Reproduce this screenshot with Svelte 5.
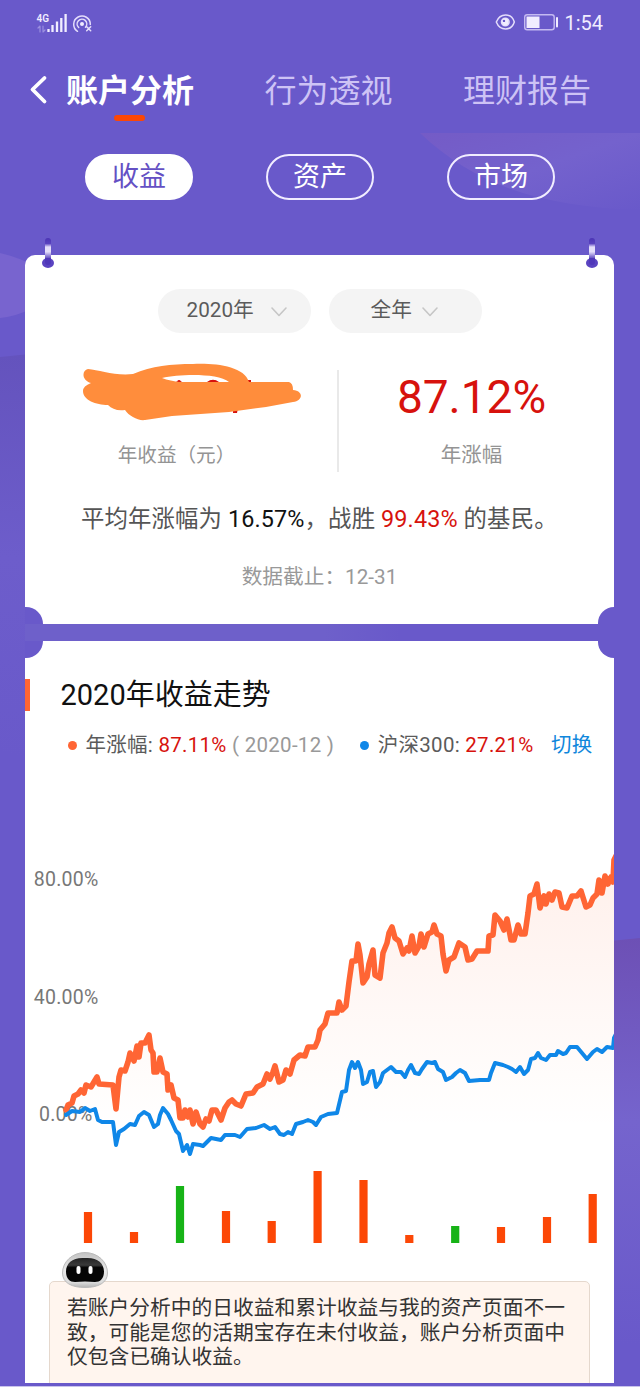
<script lang="ts">
	type Point = [number, number];

	const tabs = ['账户分析', '行为透视', '理财报告'];
	const views = ['收益', '资产', '市场'];

	let activeTab = $state(0);
	let activeView = $state(0);

	// both series share the chart's viewBox units
	const fund: Point[] = [
		[66, 1110], [68, 1105], [72, 1103], [74, 1096], [78, 1094], [81, 1090], [84, 1093], [86, 1085],
		[91, 1087], [94, 1082], [97, 1077], [99, 1084], [113, 1085], [116, 1109], [119, 1077], [121, 1070],
		[125, 1071], [128, 1062], [130, 1053], [134, 1061], [137, 1046], [139, 1057], [141, 1043],
		[145, 1043], [149, 1035], [151, 1050], [153, 1053], [154, 1072], [157, 1072], [160, 1058],
		[163, 1072], [167, 1074], [168, 1090], [171, 1085], [174, 1098], [178, 1100], [180, 1118],
		[183, 1118], [185, 1110], [188, 1117], [190, 1110], [193, 1124], [196, 1112], [200, 1124], [203, 1127],
		[206, 1119], [209, 1121], [212, 1110], [216, 1110], [221, 1120], [225, 1108], [229, 1102],
		[232, 1100], [236, 1104], [241, 1106], [246, 1094], [253, 1093], [257, 1087], [263, 1084],
		[267, 1074], [270, 1079], [273, 1072], [275, 1066], [279, 1082], [283, 1080], [286, 1070], [290, 1074],
		[294, 1060], [300, 1055], [305, 1056], [308, 1047], [315, 1047], [318, 1040], [320, 1030],
		[325, 1024], [328, 1013], [337, 1013], [339, 1002], [342, 1010], [346, 1006], [349, 982],
		[352, 961], [356, 961], [358, 944], [360, 955], [363, 983], [367, 977], [369, 964], [373, 950],
		[375, 975], [380, 978], [383, 953], [387, 943], [389, 933], [392, 927], [395, 938], [399, 941],
		[403, 954], [407, 948], [409, 951], [412, 936], [415, 953], [419, 946], [421, 934], [424, 947],
		[428, 934], [432, 932], [434, 925], [437, 934], [441, 936], [443, 954], [446, 971], [449, 960],
		[454, 957], [459, 943], [465, 947], [468, 960], [472, 959], [477, 951], [488, 951], [489, 936],
		[493, 935], [495, 915], [500, 921], [504, 930], [507, 919], [511, 940], [514, 940], [518, 925],
		[521, 934], [525, 934], [528, 913], [530, 896], [534, 894], [537, 884], [540, 908], [544, 896],
		[546, 904], [549, 894], [552, 900], [555, 892], [559, 893], [562, 907], [567, 908], [572, 896],
		[577, 896], [581, 891], [586, 907], [590, 905], [593, 898], [597, 894], [599, 880], [602, 893],
		[605, 876], [608, 884], [611, 877], [613, 882], [614, 860], [616, 856]
	];

	const index300: Point[] = [
		[66, 1115], [72, 1111], [80, 1112], [85, 1108], [90, 1111], [95, 1109], [98, 1120], [102, 1122],
		[113, 1122], [116, 1145], [119, 1132], [124, 1129], [130, 1124], [135, 1125], [139, 1116],
		[144, 1112], [149, 1115], [154, 1127], [158, 1124], [160, 1115], [163, 1108], [168, 1114],
		[171, 1120], [176, 1131], [179, 1134], [183, 1151], [187, 1145], [190, 1154], [193, 1144],
		[200, 1145], [203, 1146], [207, 1142], [211, 1138], [216, 1139], [221, 1140], [225, 1135],
		[230, 1135], [235, 1135], [240, 1137], [247, 1129], [256, 1128], [264, 1125], [270, 1129],
		[275, 1127], [280, 1134], [284, 1135], [288, 1132], [292, 1134], [296, 1124], [303, 1122],
		[308, 1120], [313, 1122], [316, 1125], [321, 1117], [328, 1114], [337, 1113], [342, 1092],
		[346, 1091], [349, 1070], [352, 1062], [355, 1068], [358, 1062], [361, 1070], [363, 1084],
		[367, 1082], [370, 1072], [373, 1071], [376, 1087], [380, 1082], [383, 1073], [391, 1067],
		[396, 1072], [401, 1072], [405, 1077], [408, 1070], [411, 1065], [415, 1073], [419, 1074],
		[422, 1069], [427, 1062], [432, 1063], [435, 1062], [438, 1069], [443, 1072], [446, 1080],
		[452, 1077], [456, 1073], [460, 1070], [465, 1073], [469, 1081], [480, 1080], [489, 1080],
		[491, 1073], [495, 1063], [503, 1065], [508, 1067], [512, 1069], [516, 1072], [520, 1067],
		[524, 1074], [528, 1070], [531, 1059], [535, 1058], [538, 1053], [541, 1058], [546, 1060],
		[550, 1055], [556, 1055], [558, 1051], [563, 1054], [566, 1053], [570, 1047], [577, 1047],
		[582, 1053], [587, 1059], [593, 1052], [597, 1049], [602, 1052], [607, 1047], [613, 1048],
		[614, 1038], [616, 1034]
	];

	const months = [
		{ x: 88, height: 31 },
		{ x: 134, height: 11 },
		{ x: 180, height: 57, loss: true },
		{ x: 226, height: 32 },
		{ x: 271.7, height: 22 },
		{ x: 317.6, height: 72 },
		{ x: 363.5, height: 63 },
		{ x: 409.3, height: 8 },
		{ x: 455.2, height: 17, loss: true },
		{ x: 501, height: 16 },
		{ x: 547, height: 26 },
		{ x: 592.7, height: 49 }
	];

	const toPath = (points: Point[]) => 'M' + points.map((p) => p.join(' ')).join('L');
	const fundPath = toPath(fund);
	const fundArea = `${fundPath}V1127H66Z`;
	const indexPath = toPath(index300);
</script>

{#snippet chevron()}
	<svg class="chevron" width="18" height="12" viewBox="0 0 18 12" aria-hidden="true">
		<path d="M2 2l7 7.5L16 2" />
	</svg>
{/snippet}

{#snippet pin()}
	<svg width="14" height="32" viewBox="0 0 14 32" aria-hidden="true">
		<rect x="4" y="1" width="6" height="25" rx="3" fill="url(#pin-fill)" />
		<ellipse cx="7" cy="26" rx="6" ry="5" fill="#5a43c1" />
		<path d="M4 21h6v4a3 3 0 01-6 0z" fill="#4f37b9" />
	</svg>
{/snippet}

<div class="screen">
	<svg class="backdrop" width="640" height="1387" viewBox="0 0 640 1387" aria-hidden="true">
		<defs>
			<linearGradient id="pin-fill" x1="0" y1="0" x2="0" y2="1">
				<stop offset="0" stop-color="#4b34b4" />
				<stop offset=".22" stop-color="#5942bf" />
				<stop offset=".36" stop-color="#e4defa" />
				<stop offset=".55" stop-color="#e4defa" />
				<stop offset=".85" stop-color="#4f37b9" />
			</linearGradient>
			<linearGradient id="wave" x1="0" y1="0" x2="1" y2="1">
				<stop offset="0" stop-color="#745bc6" />
				<stop offset=".5" stop-color="#7462cd" />
				<stop offset="1" stop-color="#6959ca" />
			</linearGradient>
			<linearGradient id="side" x1="0" y1="0" x2="0" y2="1">
				<stop offset="0" stop-color="#6d50b5" />
				<stop offset=".45" stop-color="#7564cd" />
				<stop offset="1" stop-color="#6959ca" />
			</linearGradient>
			<linearGradient id="left" x1="0" y1="0" x2="0" y2="1">
				<stop offset="0" stop-color="#6453bd" />
				<stop offset=".5" stop-color="#6d5dcb" />
				<stop offset="1" stop-color="#6959ca" />
			</linearGradient>
			<linearGradient id="gap">
				<stop offset="0" stop-color="#6e60ca" />
				<stop offset=".8" stop-color="#6e60ca" />
				<stop offset="1" stop-color="#6959ca" />
			</linearGradient>
		</defs>
		<path d="M420 133H640V210C550 207 480 190 420 133Z" fill="url(#wave)" />
		<path d="M0 253Q18 257 32 265V308Q18 316 0 318Z" fill="#7864cf" />
		<path d="M0 357L30 354V760L0 750Z" fill="url(#left)" />
		<path d="M25 624H400V642H25Z" fill="url(#gap)" />
		<path d="M610 941L640 938V1345H610Z" fill="url(#side)" />
	</svg>

	<header class="status">
		<svg width="60" height="26" viewBox="34 8 60 26" aria-hidden="true">
			<text x="36.5" y="21" class="network">4G</text>
			<path d="M40 31v-6l-2 2M43 25v6l2-2" class="traffic" />
			<path d="M48.5 28v3M52.5 24v7M57 20.5V31M61.3 17v14M65.6 13v18" class="signal" />
			<circle cx="82" cy="23" r="2" fill="#f1edff" />
			<path d="M78.7 26.5a4.8 4.8 0 116.8-.3M77.5 30.3a8.3 8.3 0 1112.8-6.8" class="hotspot" />
			<path d="M86.7 25.7l4 4m0-4l-4 4" class="hotspot" />
		</svg>
		<span class="status-right">
			<svg width="66" height="20" viewBox="495 12 66 20" aria-hidden="true">
				<path d="M497.3 22C501 12.7 512.5 12.7 515.3 22C512.5 31.3 501 31.3 497.3 22Z" class="eye" />
				<circle cx="506.3" cy="22" r="3.8" class="eye" />
				<circle cx="506.3" cy="22" r="3.4" fill="#f1edff" />
				<circle cx="505" cy="20.9" r="1.2" fill="#6959ca" />
				<rect x="525.7" y="14.7" width="29.5" height="15" rx="2.5" class="battery" />
				<path d="M527.5 16.5h13v11.5h-13z" fill="#f1edff" />
				<path d="M558 18v8.5" stroke="#f1edff" stroke-width="2" />
			</svg>
			<time>1:54</time>
		</span>
	</header>

	<nav class="tabs">
		<svg class="back" width="20" height="32" viewBox="0 0 20 32" aria-label="返回">
			<path d="M16.5 3L4.5 14.5L16.5 26.5" />
		</svg>
		{#each tabs as tab, i}
			<button type="button" class:active={activeTab === i} onclick={() => (activeTab = i)}>{tab}</button>
		{/each}
	</nav>

	<div class="views">
		{#each views as view, i}
			<button type="button" class:active={activeView === i} onclick={() => (activeView = i)}>{view}</button>
		{/each}
	</div>

	<section class="card summary">
		<div class="pins">{@render pin()}{@render pin()}</div>
		<div class="filters">
			<button type="button">2020年{@render chevron()}</button>
			<button type="button" class="range">全年{@render chevron()}</button>
		</div>
		<div class="figures">
			<div class="figure">
				<svg class="scribble" width="226" height="64" viewBox="80 360 226 64" aria-hidden="true">
					<path d="M176 383l3-3 4 3M207 383q6-6 12 0M229 380h5v4h-5zM247 380h4v5h-4zM233 408h5l-1 5h-4z" fill="#d7120d" />
					<path
						d="M88 369C99 370 115 376 133 374C152 366 171 364 193 364C215 363 244 366 249 382L289 382Q293 383 293 390C304 391 303 401 293 402L266 407L229 412L172 416L145 420C138 421 129 416 125 410C117 411 112 409 108 405C96 405 83 400 83 391Q83 386 91 383C81 380 82 370 88 369ZM162 378Q170 381 181 382L229 382C218 373 180 374 162 378Z"
						fill="#ff8d3c"
						fill-rule="evenodd"
					/>
					<path d="M176 381.5l3-1.5 3 1.5M207 382q6-4.5 12 0" fill="#d7120d" />
				</svg>
				<span class="label">年收益（元）</span>
			</div>
			<div class="figure rate">
				<strong>87.12%</strong>
				<span class="label">年涨幅</span>
			</div>
		</div>
		<p class="compare">平均年涨幅为 <b>16.57%</b>，战胜 <em>99.43%</em> 的基民。</p>
		<p class="deadline">数据截止：12-31</p>
		<i class="notch left bottom"></i><i class="notch right bottom"></i>
	</section>

	<section class="card trend">
		<i class="notch left top"></i><i class="notch right top"></i>
		<h2>2020年收益走势</h2>
		<div class="legend">
			<i class="dot"></i>
			<span>年涨幅: <em>87.11%</em> <small>( 2020-12 )</small></span>
			<i class="dot blue"></i>
			<span>沪深300: <em>27.21%</em></span>
			<a href="#switch">切换</a>
		</div>
		<svg class="chart" width="589" height="480" viewBox="25 770 589 480" role="img" aria-label="2020年收益走势">
			<defs>
				<linearGradient id="area" gradientUnits="userSpaceOnUse" x1="0" y1="860" x2="0" y2="1127">
					<stop offset="0" stop-color="#ff6534" stop-opacity=".1" />
					<stop offset="1" stop-color="#ff6534" stop-opacity="0" />
				</linearGradient>
			</defs>
			<path d={fundArea} fill="url(#area)" />
			<g class="axis">
				<text x="98.5" y="886">80.00%</text>
				<text x="98.5" y="1004">40.00%</text>
				<text x="92.5" y="1121">0.00%</text>
			</g>
			<path d={fundPath} class="line fund" />
			<path d={indexPath} class="line index" />
			{#each months as month}
				<rect
					x={month.x - 4.1}
					y={1243 - month.height}
					width="8.2"
					height={month.height}
					fill={month.loss ? '#17b317' : '#fc4706'}
				/>
			{/each}
		</svg>
		<div class="notice">
			<svg class="robot" width="48" height="38" viewBox="0 0 48 38" aria-hidden="true">
				<defs>
					<linearGradient id="shell" x1="0" y1="0" x2="0" y2="1">
						<stop offset="0" stop-color="#c2c2c2" />
						<stop offset=".5" stop-color="#e9e9e9" />
						<stop offset=".85" stop-color="#dcdcdc" />
						<stop offset="1" stop-color="#b4b4b4" />
					</linearGradient>
					<linearGradient id="visor" x1="0" y1="0" x2="0" y2="1">
						<stop offset="0" stop-color="#222" />
						<stop offset=".3" stop-color="#3a3a3a" />
						<stop offset=".4" stop-color="#050505" />
					</linearGradient>
				</defs>
				<path
					d="M24 1.5C37 1.5 46.5 11 46.5 22C46.5 32 37 36.5 24 36.5S1.5 32 1.5 22C1.5 11 11 1.5 24 1.5Z"
					fill="url(#shell)"
					stroke="#bbb"
				/>
				<path d="M24 7C36 6 43 12 43 20.5C43 28 39 31 34 31Q24 30 14 31C9 31 5 28 5 20.5C5 12 12 6 24 7Z" fill="url(#visor)" />
				<rect x="15.5" y="15" width="4" height="8" rx="2" fill="#fff" />
				<rect x="27.5" y="15" width="4" height="8" rx="2" fill="#fff" />
			</svg>
			<p>
				若账户分析中的日收益和累计收益与我的资产页面不一<br />
				致，可能是您的活期宝存在未付收益，账户分析页面中<br />
				仅包含已确认收益。
			</p>
		</div>
	</section>
</div>

<style>
	:global(body) {
		background: #6959ca;
	}

	.screen {
		position: relative;
		display: flex;
		flex-direction: column;
		box-sizing: border-box;
		width: 640px;
		height: 1387px;
		overflow: hidden;
		border-bottom: 1px solid #c9c3ec;
		background: #6959ca;
		font-family: Roboto, 'Noto Sans CJK SC', sans-serif;
		font-weight: 400;
	}

	.backdrop {
		position: absolute;
		inset: 0;
	}

	svg {
		display: block;
		flex: none;
	}

	path {
		stroke-linecap: round;
		stroke-linejoin: round;
	}

	button {
		padding: 0;
		border: 0;
		background: none;
		color: inherit;
		font: inherit;
		white-space: nowrap;
		cursor: pointer;
	}

	p,
	h2 {
		margin: 0;
		font-weight: 400;
		white-space: nowrap;
	}

	em,
	i {
		font-style: normal;
	}

	.status {
		position: relative;
		display: flex;
		align-items: center;
		justify-content: space-between;
		height: 44px;
		padding: 0 37px 0 34px;
		color: #f1edff;
	}

	.status-right {
		display: flex;
		align-items: center;
		gap: 4px;
	}

	time {
		font-size: 20px;
		line-height: 24px;
		margin-top: 2px;
	}

	.network {
		fill: #f1edff;
		font-size: 10px;
		font-weight: 600;
	}

	.traffic {
		fill: none;
		stroke: #9b8fe0;
		stroke-width: 1.2;
	}

	.signal {
		stroke: #f1edff;
		stroke-width: 2.3;
		stroke-linecap: butt;
	}

	.hotspot,
	.eye {
		fill: none;
		stroke: #e4ddfb;
		stroke-width: 1.5;
	}

	.battery {
		fill: none;
		stroke: #c4baf1;
		stroke-width: 1.4;
	}

	.tabs {
		position: relative;
		display: flex;
		align-items: center;
		height: 94px;
		padding-left: 28px;
		color: #cdc3f5;
		font-size: 32px;
	}

	.back {
		margin-right: 18px;
		fill: none;
		stroke: #fff;
		stroke-width: 3.8;
	}

	.tabs button {
		position: relative;
		width: 128px;
		height: 48px;
		margin-right: 70.5px;
		line-height: 48px;
	}

	.tabs .active {
		color: #fff;
		font-weight: 700;
	}

	.tabs .active::after {
		position: absolute;
		bottom: -6px;
		left: 48px;
		width: 31px;
		height: 6px;
		border-radius: 3px;
		background: #fc4706;
		content: '';
	}

	.views {
		position: relative;
		display: flex;
		gap: 73px;
		padding: 16px 0 55px 85px;
	}

	.views button {
		box-sizing: border-box;
		width: 108px;
		height: 46px;
		padding-top: 1px;
		border: 2px solid #f1edff;
		border-radius: 23px;
		color: #fff;
		font-size: 27px;
		line-height: 41px;
	}

	.views .active {
		border-color: #fff;
		background: #fff;
		color: #6450c4;
	}

	.card {
		position: relative;
		width: 589px;
		margin-left: 25px;
		background: #fff;
	}

	.summary {
		box-sizing: border-box;
		height: 369px;
		margin-bottom: 17px;
		padding-top: 34px;
		border-radius: 10px 10px 0 0;
	}

	.pins {
		position: absolute;
		top: -18px;
		right: 15px;
		left: 16px;
		display: flex;
		justify-content: space-between;
	}

	.filters {
		display: flex;
		justify-content: center;
		gap: 18px;
	}

	.filters button {
		display: flex;
		box-sizing: border-box;
		align-items: center;
		width: 153px;
		height: 44px;
		padding: 0 0 7px 29px;
		border-radius: 22px;
		background: #f4f4f4;
		color: #5b5b5b;
		font-size: 20.7px;
	}

	.filters .range {
		padding-left: 42px;
	}

	.chevron {
		margin: 9px 0 0 16px;
		fill: none;
		stroke: #c6c6c6;
		stroke-width: 1.6;
	}

	.range .chevron {
		margin-left: 9px;
	}

	.figures {
		display: flex;
		height: 102px;
		margin-top: 37px;
	}

	.figure {
		display: flex;
		flex-direction: column;
		align-items: center;
		justify-content: space-between;
		box-sizing: border-box;
		width: 314px;
		border-right: 2px solid #e9e9e9;
	}

	.figure.rate {
		width: 265px;
		border: 0;
	}

	.scribble {
		margin: -10px 0 0 23px;
	}

	.figure strong {
		color: #d7120d;
		font-size: 46px;
		font-weight: 400;
		line-height: 54px;
	}

	.label {
		height: 32px;
		color: #949494;
		font-size: 20.5px;
		line-height: 31px;
	}

	.figure:first-child .label {
		margin-right: 9px;
		font-size: 19.6px;
	}

	.compare {
		margin: 28px 0 0 56px;
		color: #555;
		font-size: 23.4px;
		letter-spacing: 0.12px;
		line-height: 38px;
	}

	.compare b {
		color: #111;
		font-weight: 400;
	}

	em {
		color: #d7120d;
	}

	.deadline {
		margin-top: 22px;
		color: #999;
		font-size: 20.7px;
		line-height: 34px;
		text-align: center;
	}

	.notch {
		position: absolute;
		width: 18px;
		height: 17px;
		background: #6959ca;
	}

	.notch.left { left: 0; }
	.notch.right { right: 0; width: 16px; }
	.notch.bottom { bottom: 0; }
	.notch.top { top: 0; }
	.notch.left.bottom { border-top-right-radius: 17px; }
	.notch.right.bottom { border-top-left-radius: 17px; }
	.notch.left.top { border-bottom-right-radius: 17px; }
	.notch.right.top { border-bottom-left-radius: 17px; }

	.trend {
		box-sizing: border-box;
		height: 742px;
		padding-top: 38px;
		overflow: hidden;
	}

	.trend h2 {
		height: 32px;
		padding-left: 30.5px;
		border-left: 5px solid #ff6534;
		color: #111;
		font-size: 29px;
		line-height: 33px;
	}

	.legend {
		display: flex;
		align-items: center;
		height: 30px;
		margin-top: 19px;
		padding-left: 43px;
		color: #5b5b5b;
		font-size: 20.5px;
		letter-spacing: 0.28px;
		line-height: 30px;
		white-space: nowrap;
	}

	.dot {
		width: 9px;
		height: 9px;
		margin-right: 8.5px;
		border-radius: 50%;
		background: #ff6534;
	}

	.dot.blue {
		margin-left: 26px;
		background: #0f87e8;
	}

	.legend small {
		color: #999;
		font-size: inherit;
	}

	.legend a {
		margin-left: 17.5px;
		color: #0f87dc;
		text-decoration: none;
	}

	.chart {
		margin-top: 10px;
	}

	.axis text {
		fill: #777;
		font-size: 19.5px;
		letter-spacing: 0.25px;
		text-anchor: end;
	}

	.line {
		fill: none;
	}

	.fund {
		stroke: #ff6534;
		stroke-width: 5.6;
	}

	.index {
		stroke: #0f87e8;
		stroke-width: 4;
	}

	.notice {
		position: relative;
		box-sizing: border-box;
		width: 541px;
		height: 120px;
		margin: 31px 0 0 24px;
		padding: 14px 17px;
		border: 1.5px solid #e5d8cd;
		border-radius: 5px;
		background: #fff5ee;
		color: #333;
		font-size: 20.75px;
		line-height: 24.6px;
	}

	.robot {
		position: absolute;
		top: -31px;
		left: 11px;
	}
</style>
